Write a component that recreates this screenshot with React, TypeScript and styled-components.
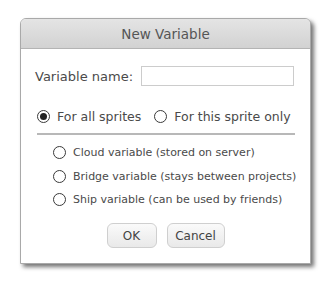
import React from 'react';
import styled, { createGlobalStyle } from 'styled-components';

const GlobalStyle = createGlobalStyle`
  html, body {
    margin: 0;
    padding: 0;
    background: #ffffff;
    font-family: "DejaVu Sans", Verdana, sans-serif;
  }
`;

const Page = styled.div`
  min-height: 295px;
  box-sizing: border-box;
  padding: 18px 0 0 20px;
`;

const Dialog = styled.div`
  width: 289px;
  height: 244px;
  border: 1px solid #a9a9a9;
  border-radius: 6px 6px 0 0;
  background: #ffffff;
  box-shadow: 3px 3px 4px rgba(0, 0, 0, 0.55);
  display: flex;
  flex-direction: column;
  overflow: hidden;
`;

const Header = styled.div`
  height: 29px;
  flex: none;
  border-bottom: 1px solid #b4b4b4;
  background: linear-gradient(#e4e4e4, #d2d2d2);
  display: flex;
  align-items: center;
  justify-content: center;
  font-size: 13.5px;
  color: #555555;
`;

const Body = styled.div`
  padding: 17px 15px 0 14px;
  display: flex;
  flex-direction: column;
  color: #4a4a4a;
`;

const NameRow = styled.label`
  display: flex;
  align-items: center;
  gap: 8px;
  font-size: 13px;
`;

const NameInput = styled.input`
  width: 147px;
  height: 18px;
  border: 1px solid #cccccc;
  padding: 0 2px;
  font-family: inherit;
  outline: none;
`;

const ScopeRow = styled.div`
  display: flex;
  align-items: center;
  gap: 13px;
  margin-top: 23px;
  padding-left: 2px;
`;

const Option = styled.div<{ $size: number }>`
  display: flex;
  align-items: center;
  gap: 7px;
  font-size: ${p => p.$size}px;
  white-space: nowrap;
`;

const Radio = styled.span<{ $checked?: boolean }>`
  width: 11px;
  height: 11px;
  border: 1px solid #3a3a3a;
  border-radius: 50%;
  display: flex;
  align-items: center;
  justify-content: center;
  flex: none;
  &::after {
    content: '';
    width: 7px;
    height: 7px;
    border-radius: 50%;
    background: ${p => (p.$checked ? '#222222' : 'transparent')};
  }
`;

const Divider = styled.div`
  height: 2px;
  margin: 9px 0 0 2px;
  background: #b8b8b8;
`;

const CloudList = styled.div`
  display: flex;
  flex-direction: column;
  gap: 10.5px;
  padding: 11px 0 0 18px;
`;

const Buttons = styled.div`
  display: flex;
  justify-content: center;
  gap: 10px;
  margin-top: 17px;
  padding-left: 1px;
`;

const Button = styled.button<{ $w: number }>`
  width: ${p => p.$w}px;
  height: 25px;
  border: 1px solid #cfcfcf;
  border-radius: 6px;
  background: linear-gradient(#fafafa, #e9e9e9);
  font-family: inherit;
  font-size: 12px;
  color: #444444;
  padding: 0;
`;

export default function App() {
  return (
    <Page>
      <GlobalStyle />
      <Dialog>
        <Header>New Variable</Header>
        <Body>
          <NameRow>
            Variable name:
            <NameInput />
          </NameRow>
          <ScopeRow>
            <Option $size={12.5}>
              <Radio $checked />
              For all sprites
            </Option>
            <Option $size={12.5}>
              <Radio />
              For this sprite only
            </Option>
          </ScopeRow>
          <Divider />
          <CloudList>
            <Option $size={11}>
              <Radio />
              Cloud variable (stored on server)
            </Option>
            <Option $size={11}>
              <Radio />
              Bridge variable (stays between projects)
            </Option>
            <Option $size={11}>
              <Radio />
              Ship variable (can be used by friends)
            </Option>
          </CloudList>
          <Buttons>
            <Button $w={50}>OK</Button>
            <Button $w={58}>Cancel</Button>
          </Buttons>
        </Body>
      </Dialog>
    </Page>
  );
}
